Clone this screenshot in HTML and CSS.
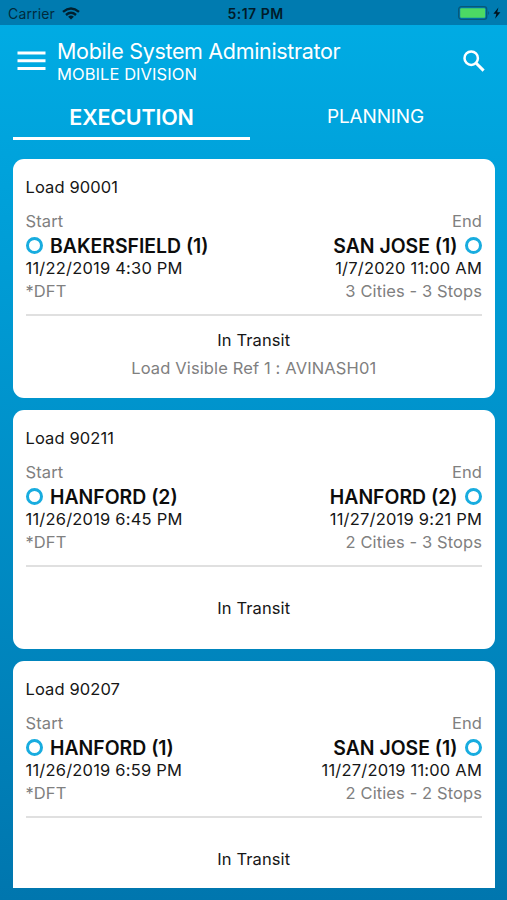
FILE: index.html
```
<!DOCTYPE html>
<html lang="en">
<head>
<meta charset="utf-8">
<title>Loads</title>
<link rel="stylesheet" href="styles.css">
</head>
<body>
<div class="status">
  <div class="carrier"><span class="carrier-name">Carrier</span>
    <svg class="wifi" width="18" height="13" viewBox="0 0 18 13" fill="none" stroke="#00202f" stroke-width="2.4"><path d="M1 4.8Q9-2 17 4.8M4 8Q9 3.7 14 8"/><path d="M9 12.6L6.1 9.7Q9 7.3 11.9 9.7Z" fill="#00202f" stroke="none"/></svg>
  </div>
  <span class="clock">5:17 PM</span>
  <div class="power">
    <svg width="45" height="16" viewBox="0 0 45 16"><rect x="0.7" y="1.7" width="28" height="12.6" rx="2.6" fill="none" stroke="#075879" stroke-width="1.3"/><rect x="2.2" y="3.2" width="25" height="9.6" rx="1" fill="#4cd964"/><path d="M30.2 6q2 2 0 4z" fill="#075879"/><path d="M40.4 2.4L35.4 8.8h3l-1.3 5L42.4 7.3h-3.2z" fill="#00121d"/></svg>
  </div>
</div>
<header class="header">
  <svg class="menu" width="29" height="20" viewBox="0 0 29 20" fill="#fff"><path d="M.5.5h28v3H.5zM.5 8.3h28v3H.5zM.5 16.1h28v3H.5z"/></svg>
  <div class="who"><div><span class="user">Mobile System Administrator</span></div><div><span class="division">MOBILE DIVISION</span></div></div>
  <svg class="search" width="22" height="22" viewBox="0 0 22 22" fill="none" stroke="#fff"><circle cx="8.2" cy="8.2" r="6.7" stroke-width="2.5"/><path d="M13 13l7.6 7.6" stroke-width="3"/></svg>
</header>
<nav class="tabs">
  <div class="tab active"><span class="tab-on">EXECUTION</span></div>
  <div class="tab"><span class="tab-off">PLANNING</span></div>
</nav>
<main class="list">
  <section class="card">
    <div class="load"><span>Load 90001</span></div>
    <div class="row muted"><span>Start</span><span>End</span></div>
    <div class="row city"><span class="place"><i class="ring"></i><span>BAKERSFIELD (1)</span></span><span class="place"><span>SAN JOSE (1)</span><i class="ring"></i></span></div>
    <div class="row date"><span>11/22/2019 4:30 PM</span><span>1/7/2020 11:00 AM</span></div>
    <div class="row muted last"><span>*DFT</span><span class="stops">3 Cities - 3 Stops</span></div>
    <div class="foot two"><span class="state">In Transit</span><span class="ref">Load Visible Ref 1 : AVINASH01</span></div>
  </section>
  <section class="card">
    <div class="load"><span>Load 90211</span></div>
    <div class="row muted"><span>Start</span><span>End</span></div>
    <div class="row city"><span class="place"><i class="ring"></i><span>HANFORD (2)</span></span><span class="place"><span>HANFORD (2)</span><i class="ring"></i></span></div>
    <div class="row date"><span>11/26/2019 6:45 PM</span><span>11/27/2019 9:21 PM</span></div>
    <div class="row muted last"><span>*DFT</span><span class="stops">2 Cities - 3 Stops</span></div>
    <div class="foot"><span class="state">In Transit</span></div>
  </section>
  <section class="card">
    <div class="load"><span>Load 90207</span></div>
    <div class="row muted"><span>Start</span><span>End</span></div>
    <div class="row city"><span class="place"><i class="ring"></i><span>HANFORD (1)</span></span><span class="place"><span>SAN JOSE (1)</span><i class="ring"></i></span></div>
    <div class="row date"><span>11/26/2019 6:59 PM</span><span>11/27/2019 11:00 AM</span></div>
    <div class="row muted last"><span>*DFT</span><span class="stops">2 Cities - 2 Stops</span></div>
    <div class="foot"><span class="state">In Transit</span></div>
  </section>
</main>
</body>
</html>
```
FILE: styles.css
```
* { box-sizing: border-box; }
body {
  margin: 0;
  height: 900px;
  overflow: hidden;
  display: flex;
  flex-direction: column;
  font-family: Inter, "Liberation Sans", sans-serif;
  font-size: 16.5px;
  line-height: 20px;
  white-space: nowrap;
  color: #161616;
  background: linear-gradient(#00ade5, #00a3dc 17%, #0076ae);
}
.status {
  height: 25px;
  flex: none;
  display: grid;
  grid-template-columns: 1fr auto 1fr;
  align-items: center;
  padding: 2px 4px 0 8px;
  background: #007bb0;
  color: #002b3d;
}
.carrier { display: flex; align-items: center; gap: 7px; font-size: 14px; letter-spacing: 0.15px; }
.clock { font-size: 14px; font-weight: 600; letter-spacing: 0.5px; color: #001b2a; }
.power { display: flex; justify-content: flex-end; }
.power svg { margin-bottom: 1px; }
.header {
  height: 73px;
  flex: none;
  display: flex;
  align-items: flex-start;
  color: #fff;
  padding: 13px 22px 0 17px;
}
.menu { margin-top: 13px; }
.who { margin-left: 11px; flex: 1; }
.user { font-size: 21.5px; line-height: 26px; letter-spacing: -0.33px; }
.division { font-size: 16.5px; line-height: 20px; letter-spacing: 0.07px; }
.who > div { display: flex; }
.search { margin-top: 12px; }
.tabs { height: 42px; flex: none; display: grid; grid-template-columns: 237px 237px; gap: 7px; padding: 0 13px; color: #fff; }
.tab { text-align: center; padding-top: 8px; }
.tab.active { border-bottom: 3px solid #fff; }
.tab-on { font-size: 21.5px; font-weight: 600; line-height: 23px; letter-spacing: -0.2px; }
.tab-off { font-size: 19px; line-height: 21px; letter-spacing: -0.15px; }
.list {
  height: 729px;
  margin: 19px 12px 0 13px;
  overflow: hidden;
  display: flex;
  flex-direction: column;
  gap: 12px;
}
.card {
  height: 239px;
  flex: none;
  background: #fff;
  border-radius: 11px;
  padding: 18px 13px 0 12.5px;
  display: flex;
  flex-direction: column;
}
.load { margin-bottom: 14px; letter-spacing: 0.1px; }
.row { display: flex; justify-content: space-between; }
.muted { color: #808080; letter-spacing: 0.1px; }
.city { font-size: 19.4px; font-weight: 600; line-height: 24px; margin-top: 3px; color: #0c0c0c; }
.place { display: flex; align-items: center; gap: 7.5px; }
.ring { width: 17px; height: 17px; border: 3px solid #18acdf; border-radius: 50%; margin-bottom: 1px; }
.date { line-height: 21px; letter-spacing: 0.2px; }
.last { margin-top: 2px; }
.foot {
  flex: 1;
  margin-top: 13px;
  border-top: 2px solid #e0e0e0;
  display: flex;
  flex-direction: column;
  align-items: center;
  justify-content: center;
  gap: 8px;
}
.two { padding-bottom: 6px; }
.state { letter-spacing: 0.1px; }
.ref { color: #808080; letter-spacing: 0.13px; }
```
